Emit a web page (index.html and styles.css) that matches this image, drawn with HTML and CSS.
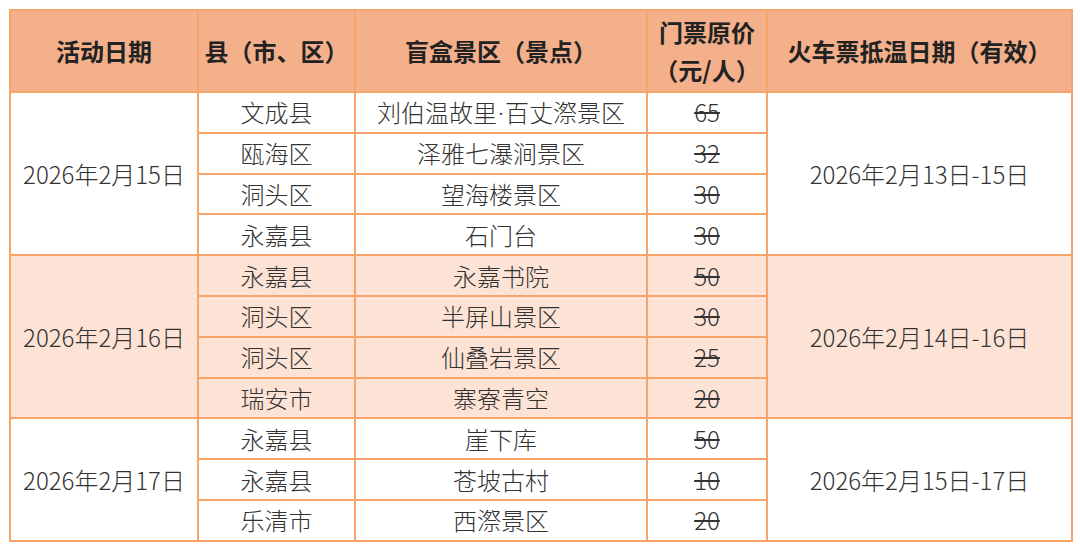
FILE: index.html
```html
<!DOCTYPE html>
<html lang="zh-CN">
<head>
<meta charset="utf-8">
<title>盲盒景区</title>
<link rel="stylesheet" href="styles.css">
</head>
<body>
<table class="tbl">
  <colgroup>
    <col class="c1"><col class="c2"><col class="c3"><col class="c4"><col class="c5">
  </colgroup>
  <thead>
    <tr class="head">
      <th>活动日期</th>
      <th>县（市、区）</th>
      <th>盲盒景区（景点）</th>
      <th class="two">门票原价<br>（元/人）</th>
      <th>火车票抵温日期（有效）</th>
    </tr>
  </thead>
  <tbody>
    <tr><td rowspan="4">2026年2月15日</td><td>文成县</td><td>刘伯温故里<span class="dot">·</span>百丈漈景区</td><td class="price"><s>65</s></td><td rowspan="4">2026年2月13日-15日</td></tr>
    <tr><td>瓯海区</td><td>泽雅七瀑涧景区</td><td class="price"><s>32</s></td></tr>
    <tr><td>洞头区</td><td>望海楼景区</td><td class="price"><s>30</s></td></tr>
    <tr><td>永嘉县</td><td>石门台</td><td class="price"><s>30</s></td></tr>
  </tbody>
  <tbody class="pink">
    <tr><td rowspan="4">2026年2月16日</td><td>永嘉县</td><td>永嘉书院</td><td class="price"><s>50</s></td><td rowspan="4">2026年2月14日-16日</td></tr>
    <tr><td>洞头区</td><td>半屏山景区</td><td class="price"><s>30</s></td></tr>
    <tr><td>洞头区</td><td>仙叠岩景区</td><td class="price"><s>25</s></td></tr>
    <tr><td>瑞安市</td><td>寨寮青空</td><td class="price"><s>20</s></td></tr>
  </tbody>
  <tbody>
    <tr><td rowspan="3">2026年2月17日</td><td>永嘉县</td><td>崖下库</td><td class="price"><s>50</s></td><td rowspan="3">2026年2月15日-17日</td></tr>
    <tr><td>永嘉县</td><td>苍坡古村</td><td class="price"><s>10</s></td></tr>
    <tr><td>乐清市</td><td>西漈景区</td><td class="price"><s>20</s></td></tr>
  </tbody>
</table>
</body>
</html>
```

FILE: styles.css
```css
html, body {
  margin: 0;
  padding: 0;
  background: #ffffff;
}
body {
  padding: 9px 0 0 9px;
  font-family: "Noto Sans CJK SC", "Noto Sans", sans-serif;
  color: #333333;
}
.tbl {
  border-collapse: collapse;
  table-layout: fixed;
  width: 1062px;
}
.c1 { width: 188px; }
.c2 { width: 157px; }
.c3 { width: 292px; }
.c4 { width: 120px; }
.c5 { width: 305px; }
.tbl th, .tbl td {
  border: 2px solid #f6a469;
  text-align: center;
  vertical-align: middle;
  padding: 0;
  white-space: nowrap;
}
.tbl th {
  background: #f3b08a;
  font-size: 24px;
  font-weight: 700;
  color: #222222;
  line-height: 38px;
}
.head { height: 82px; }
.tbl td {
  font-size: 24px;
  font-weight: 300;
  color: #333333;
  line-height: 30px;
}
.tbl tbody tr { height: 40.8px; }
.pink td { background: #fde3d6; }
.dot {
  font-family: "Noto Sans", "DejaVu Sans", sans-serif;
  padding: 0 1px;
}
.price s {
  text-decoration-thickness: 1.5px;
  text-decoration-color: #333333;
}
```
